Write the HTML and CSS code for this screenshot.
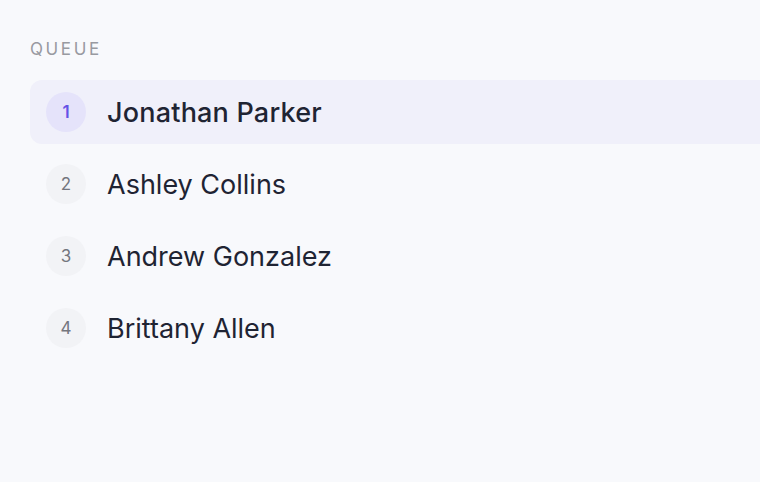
FILE: index.html
```html
<!DOCTYPE html>
<html lang="en">
<head>
<meta charset="utf-8">
<link rel="stylesheet" href="styles.css">
</head>
<body>
<main class="queue">
  <h2 class="queue-title">QUEUE</h2>
  <ol class="queue-list">
    <li class="queue-item active"><span class="num">1</span><span class="name">Jonathan Parker</span></li>
    <li class="queue-item"><span class="num">2</span><span class="name">Ashley Collins</span></li>
    <li class="queue-item"><span class="num">3</span><span class="name">Andrew Gonzalez</span></li>
    <li class="queue-item"><span class="num">4</span><span class="name">Brittany Allen</span></li>
  </ol>
</main>
</body>
</html>
```
FILE: styles.css
```css
html, body {
  margin: 0;
  padding: 0;
  background: #f8f9fc;
  overflow: hidden;
  width: 760px;
  height: 482px;
}
body {
  font-family: Inter, "Noto Sans", sans-serif;
  color: #1f2433;
}
.queue {
  box-sizing: border-box;
  width: 760px;
  height: 482px;
  padding: 38px 0 0 30px;
  overflow: hidden;
}
.queue-title {
  margin: 0 0 20px 0;
  font-size: 17px;
  line-height: 22px;
  font-weight: 400;
  letter-spacing: 2.6px;
  color: #989aa1;
}
.queue-list {
  list-style: none;
  margin: 0 -40px 0 0;
  padding: 0;
  display: flex;
  flex-direction: column;
  gap: 8px;
}
.queue-item {
  display: flex;
  align-items: center;
  gap: 21px;
  height: 64px;
  padding-left: 16px;
  border-radius: 12px;
}
.queue-item.active {
  background: #f0f0fa;
}
.num {
  width: 40px;
  height: 40px;
  border-radius: 50%;
  background: #f2f3f6;
  color: #74767e;
  font-size: 17px;
  display: flex;
  align-items: center;
  justify-content: center;
}
.active .num {
  background: #e5e3fa;
  color: #6552e6;
  font-weight: 600;
}
.name {
  font-size: 27px;
  font-weight: 400;
  color: #1f2433;
}
.active .name {
  font-weight: 500;
  letter-spacing: 0.2px;
}
```
